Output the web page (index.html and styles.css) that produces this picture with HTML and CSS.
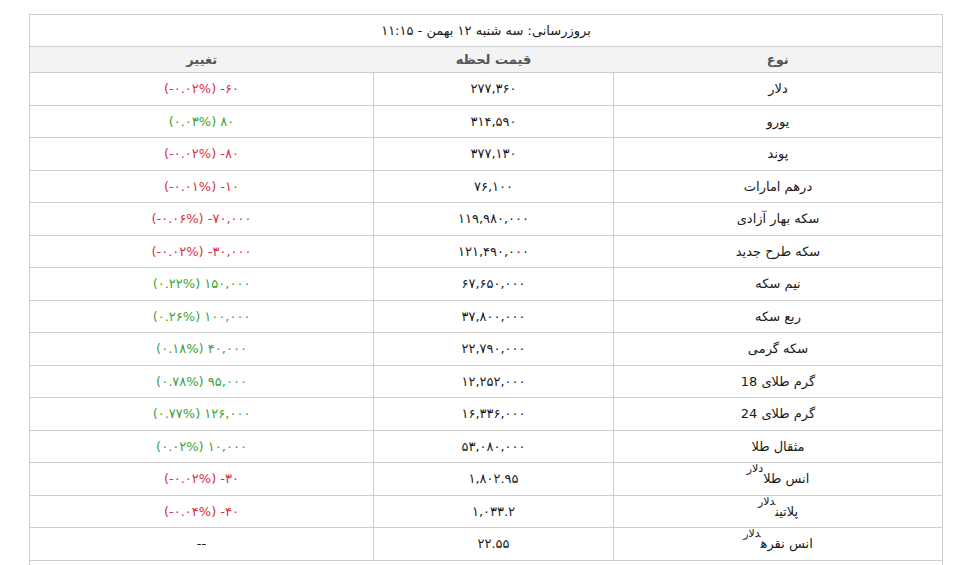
FILE: index.html
```html
<!DOCTYPE html>
<html lang="fa" dir="rtl">
<head>
<meta charset="utf-8">
<title>قیمت لحظه</title>
<link rel="stylesheet" href="styles.css">
</head>
<body>
<table class="rates">
  <colgroup>
    <col class="c-type">
    <col class="c-price">
    <col class="c-change">
  </colgroup>
  <thead>
    <tr class="title-row"><th colspan="3">بروزرسانی: سه شنبه ۱۲ بهمن - ۱۱:۱۵</th></tr>
    <tr class="head-row"><th>نوع</th><th>قیمت لحظه</th><th>تغییر</th></tr>
  </thead>
  <tbody>
    <tr><td>دلار</td><td>۲۷۷,۳۶۰</td><td><span class="chg down">(-۰.۰۲%) -۶۰</span></td></tr>
    <tr><td>یورو</td><td>۳۱۴,۵۹۰</td><td><span class="chg up">(۰.۰۳%) ۸۰</span></td></tr>
    <tr><td>پوند</td><td>۳۷۷,۱۳۰</td><td><span class="chg down">(-۰.۰۲%) -۸۰</span></td></tr>
    <tr><td>درهم امارات</td><td>۷۶,۱۰۰</td><td><span class="chg down">(-۰.۰۱%) -۱۰</span></td></tr>
    <tr><td>سکه بهار آزادی</td><td>۱۱۹,۹۸۰,۰۰۰</td><td><span class="chg down">(-۰.۰۶%) -۷۰,۰۰۰</span></td></tr>
    <tr><td>سکه طرح جدید</td><td>۱۲۱,۴۹۰,۰۰۰</td><td><span class="chg down">(-۰.۰۲%) -۳۰,۰۰۰</span></td></tr>
    <tr><td>نیم سکه</td><td>۶۷,۶۵۰,۰۰۰</td><td><span class="chg up">(۰.۲۲%) ۱۵۰,۰۰۰</span></td></tr>
    <tr><td>ربع سکه</td><td>۳۷,۸۰۰,۰۰۰</td><td><span class="chg up">(۰.۲۶%) ۱۰۰,۰۰۰</span></td></tr>
    <tr><td>سکه گرمی</td><td>۲۲,۷۹۰,۰۰۰</td><td><span class="chg up">(۰.۱۸%) ۴۰,۰۰۰</span></td></tr>
    <tr><td>گرم طلای 18</td><td>۱۲,۲۵۲,۰۰۰</td><td><span class="chg up">(۰.۷۸%) ۹۵,۰۰۰</span></td></tr>
    <tr><td>گرم طلای 24</td><td>۱۶,۳۳۶,۰۰۰</td><td><span class="chg up">(۰.۷۷%) ۱۲۶,۰۰۰</span></td></tr>
    <tr><td>مثقال طلا</td><td>۵۳,۰۸۰,۰۰۰</td><td><span class="chg up">(۰.۰۲%) ۱۰,۰۰۰</span></td></tr>
    <tr><td>انس طلا<sup>دلار</sup></td><td>۱,۸۰۲.۹۵</td><td><span class="chg down">(-۰.۰۲%) -۳۰</span></td></tr>
    <tr><td>پلاتین<sup>دلار</sup></td><td>۱,۰۳۳.۲</td><td><span class="chg down">(-۰.۰۴%) -۴۰</span></td></tr>
    <tr><td>انس نقره<sup>دلار</sup></td><td>۲۲.۵۵</td><td><span class="chg">--</span></td></tr>
  </tbody>
  <tfoot>
    <tr class="foot-row"><td colspan="3">&nbsp;</td></tr>
  </tfoot>
</table>
</body>
</html>
```

FILE: styles.css
```css
html, body {
  margin: 0;
  padding: 0;
  background: #ffffff;
}

body {
  padding: 14px 27px 0 30px;
  font-family: "DejaVu Sans", "Noto Sans", sans-serif;
  font-size: 13px;
  color: #1a1a1a;
}

.rates {
  width: 913px;
  table-layout: fixed;
  border-collapse: collapse;
  direction: rtl;
}

.c-type { width: 329px; }
.c-price { width: 240px; }
.c-change { width: 344px; }

.rates th,
.rates td {
  border: 1px solid #cfcfcf;
  text-align: center;
  padding: 8px 5px;
  line-height: 15.5px;
  font-weight: normal;
  white-space: nowrap;
}

.title-row th {
  line-height: 15px;
  color: #1a1a1a;
}

.head-row th {
  background: #f3f3f3;
  color: #555555;
  font-weight: bold;
  padding: 5px 5px;
  line-height: 15px;
  border-left: none;
  border-right: none;
}

.head-row th:first-child { border-right: 1px solid #cfcfcf; }
.head-row th:last-child { border-left: 1px solid #cfcfcf; }

.chg {
  direction: ltr;
  unicode-bidi: isolate;
  display: inline-block;
}

.chg.down { color: #d8303f; }
.chg.up { color: #3aa33a; }

sup {
  font-size: 11px;
  vertical-align: baseline;
  position: relative;
  top: -11px;
  line-height: 0;
}

.foot-row td {
  padding: 8px 5px;
}
```
